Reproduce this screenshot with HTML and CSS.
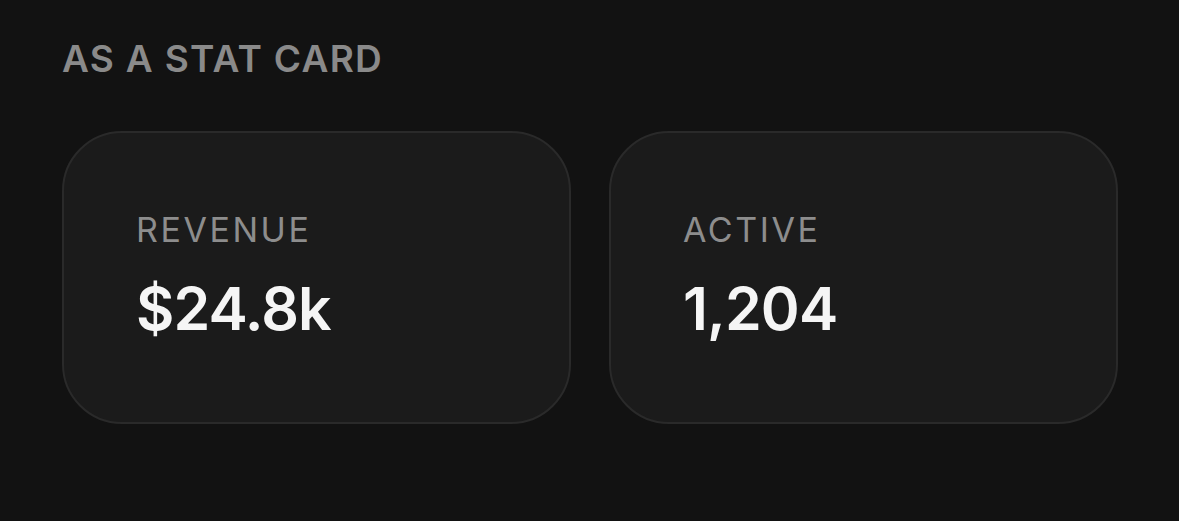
FILE: index.html
```html
<!DOCTYPE html>
<html lang="en">
<head>
    <meta charset="UTF-8">
    <meta name="viewport" content="width=device-width, initial-scale=1.0">
    <title>Stat Card</title>
    <link rel="stylesheet" href="styles.css">
</head>
<body>

    <section class="section">
        <h2 class="section-title">AS A STAT CARD</h2>

        <div class="stat-grid">
            <div class="stat-card">
                <div class="stat-label">REVENUE</div>
                <div class="stat-value">$24.8k</div>
            </div>
            <div class="stat-card">
                <div class="stat-label">ACTIVE</div>
                <div class="stat-value">1,204</div>
            </div>
        </div>
    </section>

</body>
</html>
```

FILE: styles.css
```css
body {
    font-family: Inter, "Noto Sans", sans-serif;
    margin: 0;
    padding: 0;
    background: #121212;
}

.section {
    padding: 40px 62px;
}

.section-title {
    margin: 0;
    font-size: 37px;
    line-height: 1;
    font-weight: 600;
    letter-spacing: 0.035em;
    color: #8a8a8a;
}

.stat-grid {
    display: grid;
    grid-template-columns: 509px 509px;
    gap: 38px;
    margin-top: 54px;
}

.stat-card {
    box-sizing: border-box;
    height: 293px;
    padding: 80px 0 0 72px;
    background: #1b1b1b;
    border: 2px solid #2a2a2a;
    border-radius: 60px;
}

.stat-label {
    font-size: 34px;
    line-height: 1;
    letter-spacing: 0.075em;
    color: #8d8d8d;
}

.stat-value {
    margin-top: 32px;
    font-size: 59px;
    line-height: 1;
    font-weight: 600;
    letter-spacing: -0.015em;
    color: #f5f5f5;
}
```
